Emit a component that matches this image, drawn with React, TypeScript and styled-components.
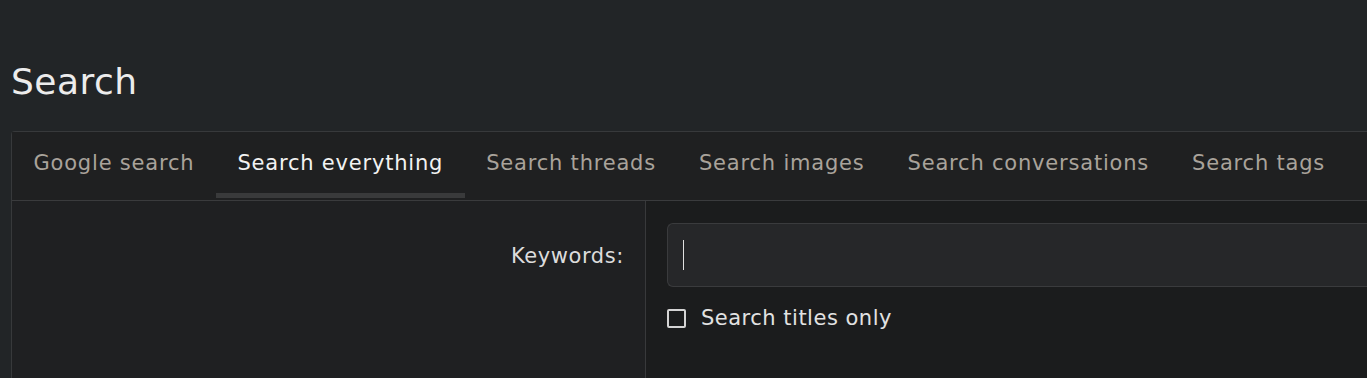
import React from "react";
import styled, { createGlobalStyle } from "styled-components";

const Global = createGlobalStyle`
  html, body { margin: 0; padding: 0; background: #222527; }
  body { font-family: "DejaVu Sans", "Open Sans", sans-serif; overflow: hidden; }
`;

const Page = styled.div`
  padding: 0 0 0 11px;
  height: 378px;
  box-sizing: border-box;
`;

const Title = styled.h1`
  margin: 0;
  padding-top: 58px;
  height: 131px;
  box-sizing: border-box;
  font-size: 36px;
  font-weight: 400;
  line-height: 48px;
  letter-spacing: 0.5px;
  color: #ececec;
`;

const Block = styled.div`
  border: 1px solid #37393b;
  border-right: none;
  border-bottom: none;
  border-radius: 4px 0 0 0;
  background: #1f2022;
  height: 247px;
  display: flex;
  flex-direction: column;
`;

const TabBar = styled.div`
  display: flex;
  height: 68px;
  border-bottom: 1px solid #3a3b3d;
  background: #1f2021;
  white-space: nowrap;
  overflow: hidden;
`;

const Tab = styled.div<{ $active?: boolean }>`
  position: relative;
  padding: 14px 21.5px 0;
  font-size: 21px;
  letter-spacing: 0.8px;
  line-height: 34px;
  color: ${(p) => (p.$active ? "#f2f2f2" : "#a9a39b")};
  &::after {
    content: "";
    display: ${(p) => (p.$active ? "block" : "none")};
    position: absolute;
    left: 0;
    right: 0;
    bottom: 2px;
    height: 5px;
    background: #393a3b;
  }
`;

const Body = styled.div`
  flex: 1;
  display: grid;
  grid-template-columns: 634px 1fr;
`;

const LabelCol = styled.div`
  border-right: 1px solid #38393b;
  padding: 38px 21px 0 0;
  text-align: right;
  font-size: 21px;
  letter-spacing: 0.6px;
  line-height: 34px;
  color: #dcdcdc;
`;

const FieldCol = styled.div`
  background: #1b1c1d;
  padding: 22px 0 0 21px;
  display: flex;
  flex-direction: column;
  gap: 14px;
`;

const Input = styled.div`
  height: 62px;
  border: 1px solid #3a3b3d;
  border-right: none;
  border-radius: 6px 0 0 6px;
  background: #262729;
  display: flex;
  align-items: center;
  padding-left: 15px;
`;

const Caret = styled.span`
  width: 1px;
  height: 30px;
  background: #e0e0e0;
`;

const CheckRow = styled.label`
  display: flex;
  align-items: center;
  gap: 15px;
  font-size: 21px;
  letter-spacing: 0.5px;
  line-height: 34px;
  color: #e2e2e2;
`;

const Box = styled.span`
  width: 15px;
  height: 15px;
  border: 2px solid #d4d4d4;
  border-radius: 2px;
`;

const tabs = [
  "Google search",
  "Search everything",
  "Search threads",
  "Search images",
  "Search conversations",
  "Search tags",
];

export default function App() {
  return (
    <>
      <Global />
      <Page>
        <Title>Search</Title>
        <Block>
          <TabBar>
            {tabs.map((t) => (
              <Tab key={t} $active={t === "Search everything"}>
                {t}
              </Tab>
            ))}
          </TabBar>
          <Body>
            <LabelCol>Keywords:</LabelCol>
            <FieldCol>
              <Input>
                <Caret />
              </Input>
              <CheckRow>
                <Box />
                Search titles only
              </CheckRow>
            </FieldCol>
          </Body>
        </Block>
      </Page>
    </>
  );
}
